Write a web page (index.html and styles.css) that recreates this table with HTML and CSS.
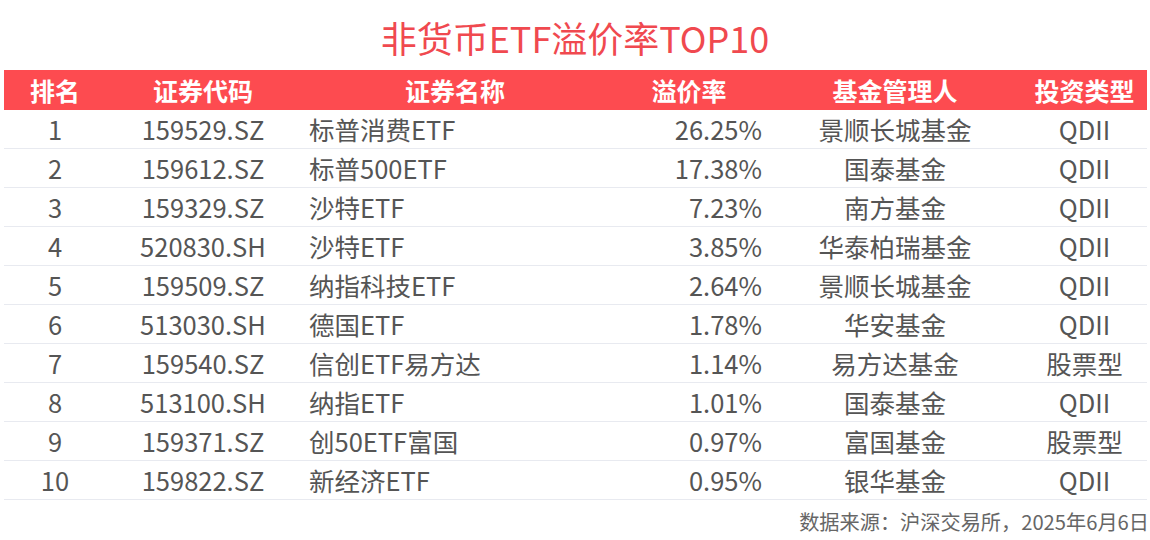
FILE: index.html
```html
<!DOCTYPE html>
<html lang="zh-CN">
<head>
<meta charset="utf-8">
<link rel="stylesheet" href="styles.css">
</head>
<body>
<div class="page">
  <h1 class="title">非货币ETF溢价率TOP10</h1>
  <div class="table">
    <div class="row head">
      <div class="c c1">排名</div>
      <div class="c c2">证券代码</div>
      <div class="c c3">证券名称</div>
      <div class="c c4">溢价率</div>
      <div class="c c5">基金管理人</div>
      <div class="c c6">投资类型</div>
    </div>
    <div class="row"><div class="c c1">1</div><div class="c c2">159529.SZ</div><div class="c c3">标普消费ETF</div><div class="c c4">26.25%</div><div class="c c5">景顺长城基金</div><div class="c c6">QDII</div></div>
    <div class="row"><div class="c c1">2</div><div class="c c2">159612.SZ</div><div class="c c3">标普500ETF</div><div class="c c4">17.38%</div><div class="c c5">国泰基金</div><div class="c c6">QDII</div></div>
    <div class="row"><div class="c c1">3</div><div class="c c2">159329.SZ</div><div class="c c3">沙特ETF</div><div class="c c4">7.23%</div><div class="c c5">南方基金</div><div class="c c6">QDII</div></div>
    <div class="row"><div class="c c1">4</div><div class="c c2">520830.SH</div><div class="c c3">沙特ETF</div><div class="c c4">3.85%</div><div class="c c5">华泰柏瑞基金</div><div class="c c6">QDII</div></div>
    <div class="row"><div class="c c1">5</div><div class="c c2">159509.SZ</div><div class="c c3">纳指科技ETF</div><div class="c c4">2.64%</div><div class="c c5">景顺长城基金</div><div class="c c6">QDII</div></div>
    <div class="row"><div class="c c1">6</div><div class="c c2">513030.SH</div><div class="c c3">德国ETF</div><div class="c c4">1.78%</div><div class="c c5">华安基金</div><div class="c c6">QDII</div></div>
    <div class="row"><div class="c c1">7</div><div class="c c2">159540.SZ</div><div class="c c3">信创ETF易方达</div><div class="c c4">1.14%</div><div class="c c5">易方达基金</div><div class="c c6">股票型</div></div>
    <div class="row"><div class="c c1">8</div><div class="c c2">513100.SH</div><div class="c c3">纳指ETF</div><div class="c c4">1.01%</div><div class="c c5">国泰基金</div><div class="c c6">QDII</div></div>
    <div class="row"><div class="c c1">9</div><div class="c c2">159371.SZ</div><div class="c c3">创50ETF富国</div><div class="c c4">0.97%</div><div class="c c5">富国基金</div><div class="c c6">股票型</div></div>
    <div class="row"><div class="c c1">10</div><div class="c c2">159822.SZ</div><div class="c c3">新经济ETF</div><div class="c c4">0.95%</div><div class="c c5">银华基金</div><div class="c c6">QDII</div></div>
  </div>
  <div class="source">数据来源：沪深交易所，2025年6月6日</div>
</div>
</body>
</html>
```

FILE: styles.css
```css
html, body {
  margin: 0;
  padding: 0;
  background: #ffffff;
}
body {
  font-family: "Noto Sans CJK SC", "Noto Sans", sans-serif;
  color: #555555;
}
.page {
  width: 1150px;
  height: 540px;
  display: flex;
  flex-direction: column;
}
.title {
  margin: 0;
  height: 70px;
  display: flex;
  align-items: center;
  justify-content: center;
  font-size: 36px;
  font-weight: 400;
  color: #f0494f;
  padding-top: 4px;
  box-sizing: border-box;
}
.table {
  margin-left: 4px;
  width: 1143px;
  display: flex;
  flex-direction: column;
}
.row {
  display: grid;
  grid-template-columns: 102px 194px 310px 158px 254px 125px;
  height: 39px;
  box-sizing: border-box;
  border-bottom: 1px solid #e8eaf0;
  align-items: center;
  font-size: 25.5px;
  line-height: 1;
}
.row.head {
  height: 40px;
  border-bottom: none;
  background: #fd4b50;
  color: #ffffff;
  font-weight: 700;
  font-size: 25px;
}
.c {
  text-align: center;
  white-space: nowrap;
}
.row .c3 {
  text-align: left;
  padding-left: 9px;
}
.row .c4 {
  text-align: right;
  padding-right: 6px;
}
.row.head .c3,
.row.head .c4 {
  text-align: center;
  padding: 0;
}
.source {
  align-self: flex-end;
  margin-top: 7px;
  margin-right: 1px;
  font-size: 20.2px;
  color: #666666;
}
```
